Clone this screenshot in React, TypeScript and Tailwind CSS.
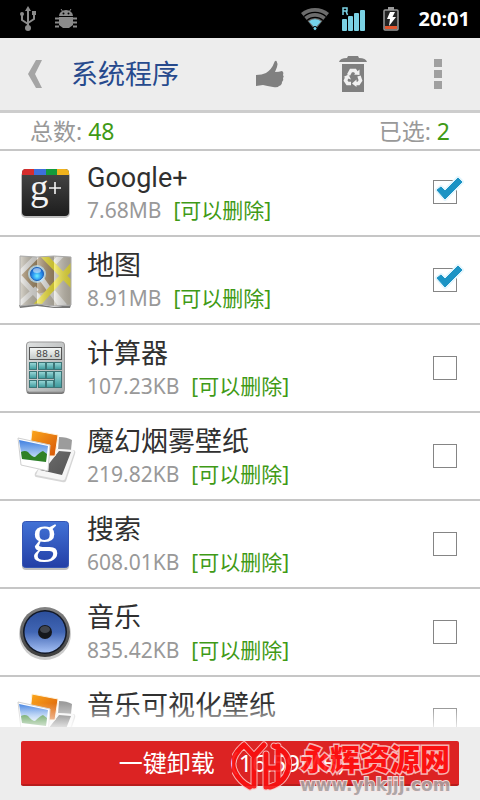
import { ReactNode, useState } from "react";

interface IApp {
  id: number;
  name: string;
  size: string;
  icon: ReactNode;
}

const GooglePlusIcon = () => (
  <svg viewBox="0 0 56 56" className="w-14 h-14 overflow-visible">
    <defs>
      <linearGradient id="plusBody" x1="0" y1="0" x2="0" y2="1">
        <stop offset="0" stopColor="#484848" />
        <stop offset="1" stopColor="#1d1d1d" />
      </linearGradient>
      <clipPath id="plusClip">
        <rect x="5" y="5" width="47" height="47" rx="4" />
      </clipPath>
    </defs>
    <rect x="4" y="7" width="49" height="47" rx="5" fill="#000" opacity="0.25" />
    <g clipPath="url(#plusClip)">
      <rect x="5" y="5" width="47" height="47" fill="url(#plusBody)" />
      <rect x="5" y="5" width="12" height="6" fill="#d62d2d" />
      <rect x="17" y="5" width="12" height="6" fill="#3e6fdc" />
      <rect x="29" y="5" width="11" height="6" fill="#149a3c" />
      <rect x="40" y="5" width="12" height="6" fill="#efb21d" />
    </g>
    <text x="13" y="36" fontSize="37" fill="#f4f4f4" className="font-['Liberation_Serif',serif]">g</text>
    <path d="M32 24H44M38 18V30" stroke="#f4f4f4" strokeWidth="1.600" />
  </svg>
);

const MapsIcon = () => (
  <svg viewBox="0 0 56 56" className="w-14 h-14">
    <defs>
      <linearGradient id="foldLight" x1="0" y1="0" x2="1" y2="0">
        <stop offset="0" stopColor="#fff" stopOpacity="0.35" />
        <stop offset="1" stopColor="#000" stopOpacity="0.18" />
      </linearGradient>
      <radialGradient id="mapPin" cx="0.5" cy="0.65" r="0.6">
        <stop offset="0" stopColor="#6ff0ff" />
        <stop offset="0.5" stopColor="#2f9cf2" />
        <stop offset="1" stopColor="#1560c8" />
      </radialGradient>
      <clipPath id="mapClip">
        <path d="M3 4L20 5L37 4L54 5V53L37 54L20 52L3 54Z" />
      </clipPath>
    </defs>
    <path d="M2 53L20 52L37 55L54 53L53 56L37 56L20 54L3 56Z" fill="#777" />
    <g clipPath="url(#mapClip)">
      <rect width="56" height="56" fill="#c4beb0" />
      <path d="M3 22L20 5H27L37 14V38L20 42L3 26Z" fill="#a8906c" />
      <path d="M0 24L20 4M0 22L26 50M24 26L44 54M0 54L20 36M36 40L48 54M36 12L48 0" stroke="#e9e8e4" strokeWidth="5" />
      <path d="M25 2L56 34M18 55L56 13" stroke="#f2e63c" strokeWidth="6" />
      <rect x="3" y="3" width="17" height="52" fill="url(#foldLight)" />
      <rect x="20" y="3" width="17" height="52" fill="url(#foldLight)" />
      <rect x="37" y="3" width="17" height="52" fill="url(#foldLight)" />
    </g>
    <path d="M3 4L20 5L37 4L54 5V53L37 54L20 52L3 54Z" fill="none" stroke="#aaa" />
    <circle cx="20" cy="22" r="9" fill="#b9e6ff" opacity="0.7" />
    <circle cx="20" cy="22" r="6.500" fill="url(#mapPin)" stroke="#1a63c0" />
    <ellipse cx="20" cy="18.500" rx="4" ry="2.500" fill="#fff" opacity="0.5" />
  </svg>
);

const CalculatorIcon = () => (
  <svg viewBox="0 0 56 56" className="w-14 h-14">
    <defs>
      <linearGradient id="calcBody" x1="0" y1="0" x2="1" y2="1">
        <stop offset="0" stopColor="#dfe1e1" />
        <stop offset="1" stopColor="#a9acac" />
      </linearGradient>
      <linearGradient id="calcScreen" x1="0" y1="0" x2="0" y2="1">
        <stop offset="0" stopColor="#f7f9f8" />
        <stop offset="1" stopColor="#c3c9c7" />
      </linearGradient>
      <linearGradient id="calcKey" x1="0" y1="0" x2="0" y2="1">
        <stop offset="0" stopColor="#9ddada" />
        <stop offset="1" stopColor="#3b999c" />
      </linearGradient>
    </defs>
    <rect x="9.500" y="4" width="38" height="50" rx="3" fill="#777" />
    <rect x="9.500" y="2" width="38" height="50" rx="3" fill="url(#calcBody)" stroke="#999" />
    <rect x="12.500" y="7.500" width="32" height="12" fill="url(#calcScreen)" stroke="#555" />
    <text x="43" y="17" fontSize="10" fill="#444" textAnchor="end" className="font-['Liberation_Mono',monospace]">88.8</text>
    {[22, 31, 40].map((y) =>
      [12, 21, 29].map((x) => (
        <rect key={`${x}-${y}`} x={x + 0.5} y={y + 0.5} width="7" height="7" fill="url(#calcKey)" stroke="#3d7577" />
      ))
    )}
    <rect x="37.500" y="22.500" width="7" height="7" fill="url(#calcKey)" stroke="#3d7577" />
    <rect x="37.500" y="31.500" width="7" height="16" fill="url(#calcKey)" stroke="#3d7577" />
  </svg>
);

const WallpaperIcon = ({ id }: { id: string }) => (
  <svg viewBox="0 0 60 56" className="w-15 h-14">
    <defs>
      <linearGradient id={`${id}Sky`} x1="0" y1="0" x2="0" y2="1">
        <stop offset="0" stopColor="#3f7fe0" />
        <stop offset="1" stopColor="#e4f3fc" />
      </linearGradient>
      <linearGradient id={`${id}Orange`} x1="0" y1="0" x2="1" y2="1">
        <stop offset="0" stopColor="#fdaa1c" />
        <stop offset="1" stopColor="#d55308" />
      </linearGradient>
      <linearGradient id={`${id}Grey`} x1="0" y1="0" x2="1" y2="1">
        <stop offset="0" stopColor="#6e6e6e" />
        <stop offset="1" stopColor="#555" />
      </linearGradient>
    </defs>
    <path d="M42 9Q50 9 55 12L54 22H41Z" fill="#9c9c9c" />
    <path d="M41 21L57 22Q59 23 58 26L49 53Q48 55 45 54L19 49Q17 48 18 45L22 40Z" fill="#d6d6d6" />
    <path d="M41 21L56 22Q58 23 57 25L48 51Q47 53 44 52L19 47L22 40Z" fill="#f6f6f6" />
    <path d="M42 23L54 24L45 47L23 42L31 37Z" fill={`url(#${id}Grey)`} />
    <path d="M15 2L41 7L38 28L32 28L13 20Z" fill={`url(#${id}Orange)`} stroke="#fff4df" />
    <path d="M1 10L33 17L31 43L4 37Z" fill="#fff" stroke="#d0d0d0" />
    <path d="M2 12L31 18L29 34L5 31Z" fill={`url(#${id}Sky)`} />
    <path d="M4 24Q8 22 11 24Q15 29 18 29Q23 24 26 23L30 26L29 34L5 31Z" fill="#2f8126" />
  </svg>
);

const SearchAppIcon = () => (
  <svg viewBox="0 0 56 56" className="w-14 h-14 overflow-visible">
    <defs>
      <linearGradient id="searchBody" x1="0" y1="0" x2="0" y2="1">
        <stop offset="0" stopColor="#4272d6" />
        <stop offset="1" stopColor="#233fa6" />
      </linearGradient>
    </defs>
    <rect x="5" y="7" width="47" height="47" rx="4" fill="#000" opacity="0.25" />
    <rect x="5.500" y="5.500" width="46" height="46" rx="3" fill="url(#searchBody)" stroke="#3455b4" />
    <text x="28" y="35" fontSize="53" fill="#fff" textAnchor="middle" className="font-['Liberation_Serif',serif]">g</text>
  </svg>
);

const MusicIcon = () => (
  <svg viewBox="0 0 56 56" className="w-14 h-14">
    <defs>
      <linearGradient id="coneFill" x1="0" y1="0" x2="0" y2="1">
        <stop offset="0" stopColor="#2c4f9c" />
        <stop offset="0.5" stopColor="#4166b4" />
        <stop offset="1" stopColor="#a5c0f4" />
      </linearGradient>
      <linearGradient id="rimFill" x1="0" y1="0" x2="0" y2="1">
        <stop offset="0" stopColor="#838383" />
        <stop offset="1" stopColor="#3c3c3c" />
      </linearGradient>
    </defs>
    <circle cx="28" cy="30" r="26" fill="#000" opacity="0.2" />
    <circle cx="28" cy="28" r="25" fill="url(#rimFill)" />
    <circle cx="28" cy="28" r="22" fill="#111827" />
    <circle cx="28" cy="28" r="20.500" fill="url(#coneFill)" />
    <circle cx="28" cy="28" r="7" fill="#15171c" />
    <ellipse cx="28" cy="25.500" rx="5" ry="3.500" fill="#41454d" />
  </svg>
);

const StatusBar = () => (
  <div className="flex items-center justify-between h-[38px] shrink-0 bg-black pl-5 pr-[10px]">
    <div className="flex items-center gap-[19px]">
      <svg viewBox="0 0 16 26" className="w-4 h-[26px]" fill="none" stroke="#8a8a8a" strokeWidth="2">
        <path d="M8 4V22M8 18L2 14V8M8 17L14 13V9" />
        <path d="M8 0L11 5H5Z" fill="#8a8a8a" stroke="none" />
        <circle cx="8" cy="22" r="3" fill="#8a8a8a" stroke="none" />
        <circle cx="2" cy="8" r="2" fill="#8a8a8a" stroke="none" />
        <rect x="12" y="5" width="4" height="4" fill="#8a8a8a" stroke="none" />
      </svg>
      <svg viewBox="0 0 22 22" className="w-[22px] h-[22px]" fill="#8a8a8a">
        <path d="M4 8A7 6 0 0 1 18 8Z" />
        <path d="M6 1L8 4M16 1L14 4" stroke="#8a8a8a" />
        <path d="M4 9H18V17L14 20H8L4 17Z" />
        <path d="M0 10.500H4M0 14.500H4M0 18.500H4M18 10.500H22M18 14.500H22M18 18.500H22" stroke="#8a8a8a" strokeWidth="2" />
        <circle cx="8.500" cy="5.500" r="1" fill="#000" />
        <circle cx="13.500" cy="5.500" r="1" fill="#000" />
      </svg>
    </div>
    <div className="flex items-center">
      <svg viewBox="0 0 30 24" className="w-[30px] h-6 mr-3">
        <path d="M15 23L1 6A22 22 0 0 1 29 6Z" fill="#6c6c6c" />
        <path d="M4 9.500A17 17 0 0 1 26 9.500M7 13.500A12 12 0 0 1 23 13.500" fill="none" stroke="#000" strokeWidth="1.200" />
        <path d="M15 21L9 14.500A9 9 0 0 1 21 14.500Z" fill="#74d3ea" />
        <circle cx="15" cy="21.500" r="2" fill="#74d3ea" stroke="#000" />
      </svg>
      <svg viewBox="0 0 24 26" className="w-6 h-[26px] mr-[17px]" fill="#7bd2e4">
        <rect x="0" y="13" width="5" height="12" rx="1" />
        <rect x="6" y="10" width="5" height="15" rx="1" />
        <rect x="12" y="7" width="5" height="18" rx="1" />
        <rect x="18" y="4" width="5" height="21" rx="1" />
        <path d="M1 9V2H5V5H1M4 5L5.500 9" fill="none" stroke="#7bd2e4" strokeWidth="1.500" />
      </svg>
      <svg viewBox="0 0 16 24" className="w-4 h-6 mr-5">
        <rect x="5" y="0" width="6" height="3" fill="#999" />
        <rect x="1" y="3" width="14" height="20" rx="1" fill="#222" stroke="#999" strokeWidth="1.500" />
        <rect x="2" y="19" width="12" height="3" fill="#e2552d" />
        <path d="M7 5H12L9.500 10H13L6 19L7 12H4Z" fill="#fff" />
      </svg>
      <span className="text-[20px] leading-none font-bold text-white">20:01</span>
    </div>
  </div>
);

const Header = () => (
  <header className="flex items-center h-[75px] shrink-0 bg-[#ededed] border-b-[3px] border-[#cdcdcd] pl-7 pr-[38px]">
    <button aria-label="返回">
      <svg viewBox="0 0 15 28" className="w-[15px] h-7">
        <path d="M8 0H14L7 14L14 28H8L0 14Z" fill="#a5a5a5" />
      </svg>
    </button>
    <h1 className="text-[27px] leading-9 text-[#274a8d] ml-7">系统程序</h1>
    <div className="flex items-center ml-auto">
      <button aria-label="推荐" className="mr-[54px]">
        <svg viewBox="0 0 30 28" className="w-[30px] h-7" fill="#808080">
          <path d="M1 15Q7 15 11 13Q17 9 19 3Q20 0 21.500 1Q23 3 22 7L20 12Q24 12 27 11Q29 12 28 15Q29.500 17 28 18Q29 20 27 22Q27 25 24 26Q23 28 18 27Q12 26 8 25L1 26Z" />
        </svg>
      </button>
      <button aria-label="回收站" className="mr-[67px]">
        <svg viewBox="0 0 28 38" className="w-7 h-[38px]" fill="#808080">
          <path d="M9 1H19L20 3Q27 3 28 7H0Q1 3 8 3Z" />
          <path d="M3 9H25V37H3Z" />
          <g fill="none" stroke="#f1f1f1" strokeWidth="3.500">
            <path d="M9.500 20L12 15.500H16L18 18.500" />
            <path d="M20 21L21.500 25.500L19.500 28.500H16" />
            <path d="M12 28.500H8.500L6.500 25.500L8 22" />
          </g>
          <path d="M15 19.500L20.500 20V14.500ZM17.500 24.500V32L13 28.500ZM4.500 22L9.500 19.500L12 24.500Z" fill="#f1f1f1" />
        </svg>
      </button>
      <button aria-label="更多" className="flex flex-col gap-[3px]">
        <span className="w-2 h-2 bg-[#a0a0a0]" />
        <span className="w-2 h-2 bg-[#a0a0a0]" />
        <span className="w-2 h-2 bg-[#a0a0a0]" />
      </button>
    </div>
  </header>
);

const apps: IApp[] = [
  { id: 1, name: "Google+", size: "7.68MB", icon: <GooglePlusIcon /> },
  { id: 2, name: "地图", size: "8.91MB", icon: <MapsIcon /> },
  { id: 3, name: "计算器", size: "107.23KB", icon: <CalculatorIcon /> },
  { id: 4, name: "魔幻烟雾壁纸", size: "219.82KB", icon: <WallpaperIcon id="smoke" /> },
  { id: 5, name: "搜索", size: "608.01KB", icon: <SearchAppIcon /> },
  { id: 6, name: "音乐", size: "835.42KB", icon: <MusicIcon /> },
  { id: 7, name: "音乐可视化壁纸", size: "", icon: <WallpaperIcon id="visual" /> },
];

interface IAppRowProps {
  app: IApp;
  checked: boolean;
  onToggle: () => void;
}

const AppRow = ({ app, checked, onToggle }: IAppRowProps) => (
  <li className="border-b-2 border-[#c6c6c6]">
    <label className="flex items-center h-[86px] px-[17px]">
      <span className="w-[70px] shrink-0">{app.icon}</span>
      <span className="flex flex-col grow h-16">
        <span className="text-[27px] leading-9 text-[#303030] font-[Roboto,'Noto_Sans_CJK_SC',sans-serif]">
          {app.name}
        </span>
        {app.size && (
          <span className="flex gap-3 text-[21px] leading-7">
            <span className="text-[#999999]">{app.size}</span>
            <span className="text-[#3f9a16]">[可以删除]</span>
          </span>
        )}
      </span>
      <span className="relative flex w-[30px]">
        <input
          type="checkbox"
          checked={checked}
          onChange={onToggle}
          className="appearance-none w-6 h-6 border border-[#858585] bg-white"
        />
        {checked && (
          <svg viewBox="0 0 30 26" className="absolute -top-1 left-0 w-[30px] h-[26px] pointer-events-none overflow-visible">
            <path d="M4 14L8 11L12 15L25 2L29 6L12 23Z" fill="#e2f5fd" stroke="#e2f5fd" strokeWidth="4" strokeLinejoin="round" />
            <path d="M4 14L8 11L12 15L25 2L29 6L12 23Z" fill="#1b93c4" stroke="#1b93c4" />
          </svg>
        )}
      </span>
    </label>
  </li>
);

const logoStrokes =
  "M12 4Q-4 18 3 31Q8 41 18 46M12 4L22 15L32 4M22 15V45M34 13V46M34 27H46M46 5V42M42 5Q60 12 56 29Q52 42 38 46";

const Watermark = () => (
  <div className="absolute top-[14px] left-[232px] flex gap-2 opacity-90 pointer-events-none">
    <svg viewBox="0 0 60 50" className="w-[60px] h-[50px]" fill="none" strokeLinejoin="round" strokeLinecap="round">
      <path d={logoStrokes} stroke="#f9c4c4" strokeWidth="7" />
      <path d={logoStrokes} stroke="#f91010" strokeWidth="5" />
    </svg>
    <div className="flex flex-col">
      <span className="text-[30px] leading-9 font-black text-[#ff1010] [-webkit-text-stroke:3px_#f9c4c4] [paint-order:stroke]">
        永辉资源网
      </span>
      <span className="text-[17px] leading-4 font-bold font-['DejaVu_Sans',sans-serif] text-[#a8a0a0] [-webkit-text-stroke:2px_#f6e8e8] [paint-order:stroke]">
        www.yhkjjj.com
      </span>
    </div>
  </div>
);

const App = () => {
  const [selected, setSelected] = useState<number[]>([1, 2]);

  const handleToggle = (id: number) => {
    if (selected.includes(id)) setSelected(selected.filter((item) => item != id));
    else setSelected([...selected, id]);
  };

  return (
    <div className="flex flex-col h-screen overflow-hidden bg-white font-['Noto_Sans','Noto_Sans_CJK_SC',sans-serif]">
      <StatusBar />
      <Header />
      <div className="flex items-center justify-between h-[38px] shrink-0 border-b-2 border-[#c6c6c6] px-[30px] text-[23px] text-[#999999]">
        <p>
          总数: <span className="text-[#3f9a16]">48</span>
        </p>
        <p>
          已选: <span className="text-[#3f9a16]">{selected.length}</span>
        </p>
      </div>
      <main className="relative flex-1 min-h-0 overflow-hidden">
        <ul className="-mt-0.5">
          {apps.map((app) => (
            <AppRow
              key={app.id}
              app={app}
              checked={selected.includes(app.id)}
              onToggle={() => handleToggle(app.id)}
            />
          ))}
        </ul>
        <div className="absolute inset-x-0 bottom-0 h-6 bg-linear-to-b from-white/0 to-white/80 pointer-events-none" />
      </main>
      <footer className="relative h-[73px] shrink-0 bg-[#ededed] px-[21px] pt-[14px]">
        <button className="w-full h-[45px] rounded-xs bg-[#dc2323] border-b-2 border-[#b81c1c] text-[24px] leading-none text-white">
          一键卸载（16.59MB）
        </button>
        <Watermark />
      </footer>
    </div>
  );
};

export default App;
